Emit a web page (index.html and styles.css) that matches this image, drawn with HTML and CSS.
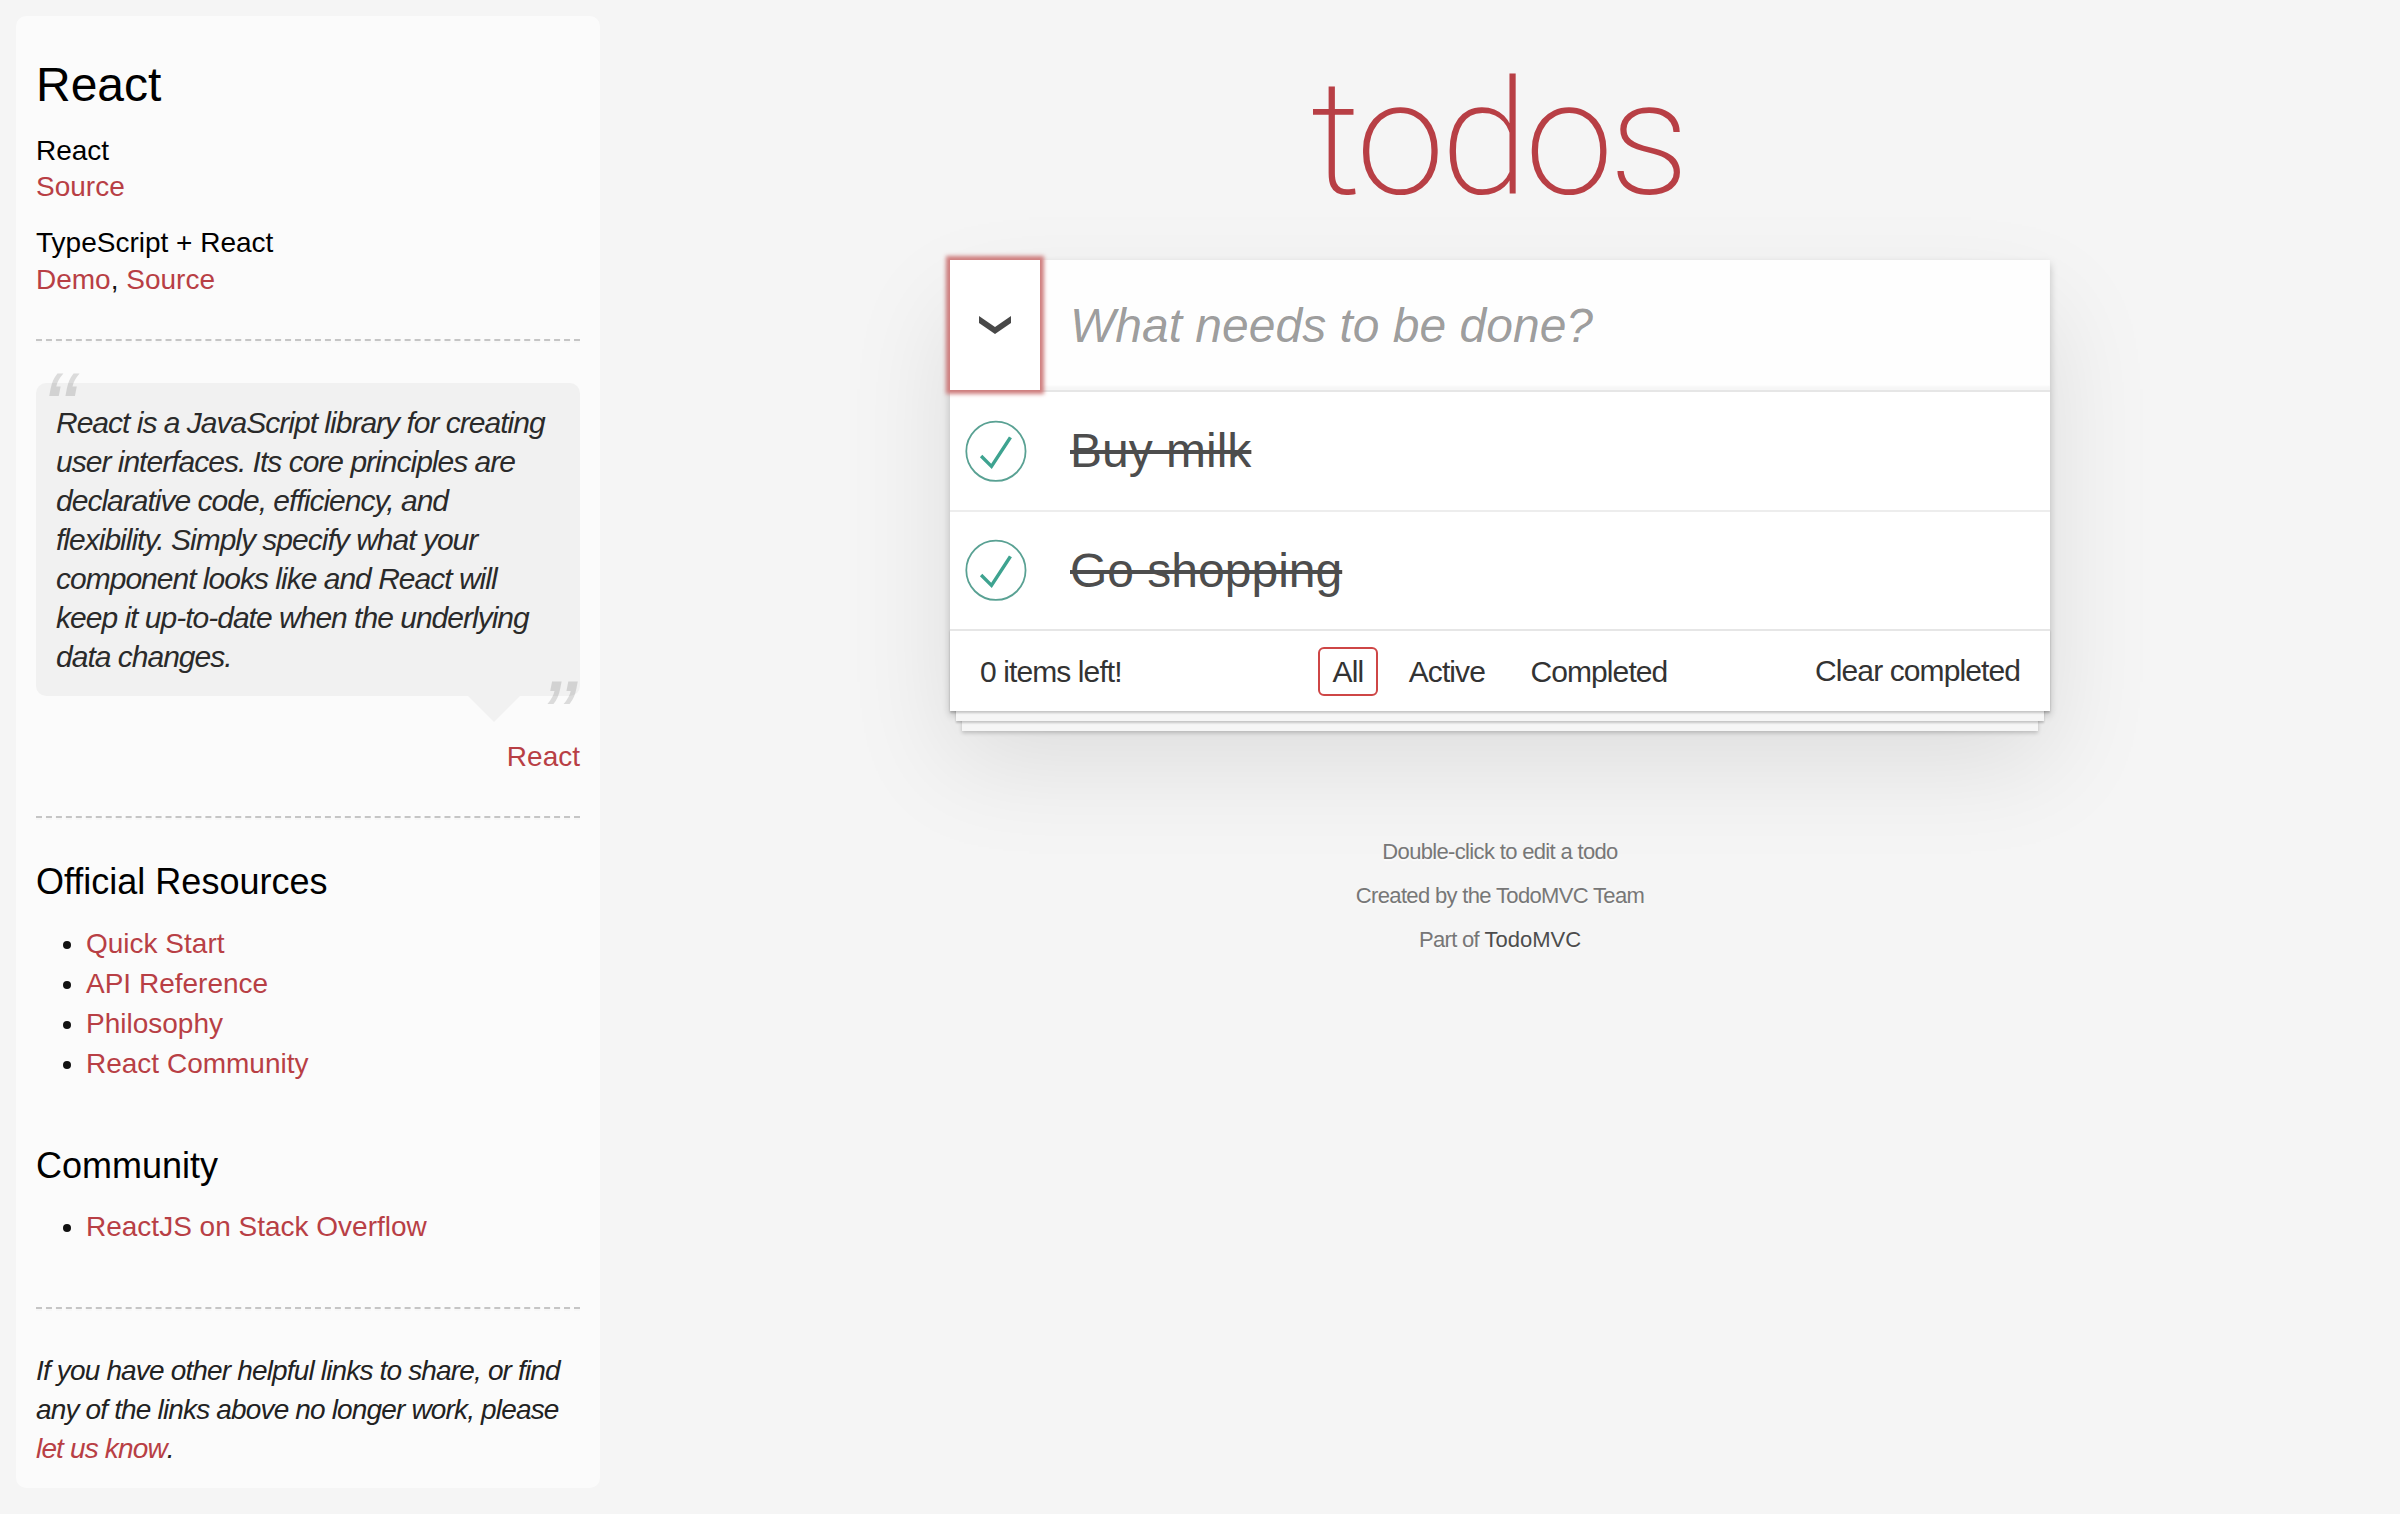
FILE: index.html
```html
<!DOCTYPE html>
<html lang="en">
<head>
<meta charset="utf-8">
<title>React • TodoMVC</title>
<link rel="stylesheet" href="styles.css">
</head>
<body>
<div class="page">
  <aside class="learn">
    <header>
      <h3>React</h3>
      <h5>React</h5>
      <div class="source-links"><a href="#">Source</a></div>
      <h5>TypeScript + React</h5>
      <div class="source-links"><a href="#">Demo</a>, <a href="#">Source</a></div>
    </header>
    <hr>
    <blockquote class="quote">
      <div class="speech-bubble">
        <p>React is a JavaScript library for creating<br> user interfaces. Its core principles are<br> declarative code, efficiency, and<br> flexibility. Simply specify what your<br> component looks like and React will<br> keep it up-to-date when the underlying<br> data changes.</p>
      </div>
      <footer class="quote-footer"><a href="#">React</a></footer>
    </blockquote>
    <hr>
    <h4>Official Resources</h4>
    <ul>
      <li><a href="#">Quick Start</a></li>
      <li><a href="#">API Reference</a></li>
      <li><a href="#">Philosophy</a></li>
      <li><a href="#">React Community</a></li>
    </ul>
    <h4>Community</h4>
    <ul>
      <li><a href="#">ReactJS on Stack Overflow</a></li>
    </ul>
    <footer class="learn-footer">
      <hr>
      <em>If you have other helpful links to share, or find<br> any of the links above no longer work, please<br> <a href="#">let us know</a>.</em>
    </footer>
  </aside>

  <main class="app-col">
    <div class="container">
      <h1 class="title">todos</h1>
      <section class="todoapp">
        <header class="header">
          <label class="toggle-all" aria-label="Mark all as complete">
            <svg class="chevron" viewBox="0 0 32 20" width="32" height="20" aria-hidden="true"><polygon points="0,1 16,12 32,1 32,8 16,19 0,8" fill="#484848"/></svg>
          </label>
          <input class="new-todo" type="text" placeholder="What needs to be done?">
        </header>
        <ul class="todo-list">
          <li class="completed">
            <svg class="check" viewBox="-10 -18 100 135" width="80" height="80" aria-hidden="true"><circle cx="50" cy="50" r="50" fill="none" stroke="#59A193" stroke-width="3"/><path fill="#3EA390" d="M72 25L42 71 27 56l-4 4 20 20 34-52z"/></svg>
            <label>Buy milk</label>
          </li>
          <li class="completed">
            <svg class="check" viewBox="-10 -18 100 135" width="80" height="80" aria-hidden="true"><circle cx="50" cy="50" r="50" fill="none" stroke="#59A193" stroke-width="3"/><path fill="#3EA390" d="M72 25L42 71 27 56l-4 4 20 20 34-52z"/></svg>
            <label>Go shopping</label>
          </li>
        </ul>
        <footer class="footer">
          <span class="todo-count"><strong>0</strong> items left!</span>
          <ul class="filters">
            <li><a href="#" class="selected">All</a></li>
            <li><a href="#">Active</a></li>
            <li><a href="#">Completed</a></li>
          </ul>
          <button class="clear-completed" type="button">Clear completed</button>
        </footer>
      </section>
      <footer class="info">
        <p>Double-click to edit a todo</p>
        <p>Created by the TodoMVC Team</p>
        <p>Part of <a href="#">TodoMVC</a></p>
      </footer>
    </div>
  </main>
</div>
</body>
</html>
```

FILE: styles.css
```css
html {
  background: #f5f5f5;
}

body {
  margin: 0;
  font-family: "Liberation Sans", Arial, Helvetica, sans-serif;
  font-size: 28px;
  line-height: 39.2px;
  font-weight: 300;
  color: #111111;
  background: #f5f5f5;
}

.page {
  display: flex;
  align-items: flex-start;
}

/* ---------- Learn sidebar ---------- */

.learn {
  flex: none;
  width: 544px;
  margin: 16px 0 16px 16px;
  padding: 20px;
  border-radius: 10px;
  background: rgba(255, 255, 255, 0.6);
}

.learn a {
  color: #b83f45;
  text-decoration: none;
  font-weight: 400;
}

.learn h3,
.learn h4,
.learn h5 {
  margin: 20px 0;
  font-weight: 500;
  line-height: 1.2;
  color: #000;
}

.learn h3 {
  font-size: 48px;
}

.learn h4 {
  font-size: 36px;
}

.learn h5 {
  font-size: 28px;
  margin-bottom: 0;
}

.learn hr {
  height: 0;
  margin: 40px 0;
  border: 0;
  border-top: 2px dashed #c5c5c5;
  border-bottom: 2px dashed #f7f7f7;
}

.learn ul {
  padding: 0;
  margin: 0 0 60px 50px;
}

.learn li {
  line-height: 40px;
}

.quote {
  margin: 40px 0;
}

.speech-bubble {
  position: relative;
  padding: 20px;
  background: rgba(0, 0, 0, 0.04);
  border-radius: 10px;
}

.speech-bubble::after {
  content: "";
  position: absolute;
  top: 100%;
  right: 60px;
  border: 26px solid transparent;
  border-top-color: rgba(0, 0, 0, 0.04);
}

.quote p {
  margin: 0;
  font-size: 30px;
  line-height: 1.3;
  font-style: italic;
  font-weight: 300;
  letter-spacing: -0.033em;
  color: #2a2a2a;
}

.quote p::before,
.quote p::after {
  position: absolute;
  font-size: 100px;
  opacity: 0.15;
  letter-spacing: 0;
}

.quote p::before {
  content: "\201C";
  top: -40px;
  left: 6px;
}

.quote p::after {
  content: "\201D";
  bottom: -84px;
  right: 6px;
}

.quote-footer {
  margin-top: 41px;
  text-align: right;
}

.learn-footer em {
  font-style: italic;
  letter-spacing: -0.03em;
  color: #222;
}

/* ---------- App column ---------- */

.app-col {
  flex: 1;
  min-width: 0;
  padding-top: 59px;
}

.container {
  width: 1100px;
  margin: 0 auto;
}

.title {
  margin: 0 0 41px;
  height: 160px;
  font-family: Roboto, "Liberation Sans", sans-serif;
  font-size: 160px;
  line-height: 160px;
  font-weight: 200;
  letter-spacing: -4px;
  text-indent: -4px;
  text-align: center;
  color: #b83f45;
}

.todoapp {
  background: #fff;
  margin: 0 0 80px;
  box-shadow: 0 4px 8px 0 rgba(0, 0, 0, 0.2),
              0 50px 100px 0 rgba(0, 0, 0, 0.1);
}

.header {
  display: flex;
}

.toggle-all {
  position: relative;
  z-index: 1;
  flex: none;
  width: 90px;
  height: 130px;
  display: flex;
  align-items: center;
  justify-content: center;
  box-shadow: 0 0 4px 4px #cf7d7d;
}

.chevron {
  display: block;
}

.new-todo {
  flex: 1;
  min-width: 0;
  height: 130px;
  box-sizing: border-box;
  margin: 0;
  padding: 32px 32px 32px 30px;
  border: none;
  font-family: inherit;
  font-size: 48px;
  font-weight: 300;
  line-height: 1.4em;
  color: inherit;
  background: rgba(0, 0, 0, 0.003);
  box-shadow: inset 0 -4px 2px rgba(0, 0, 0, 0.03);
  outline: none;
}

.new-todo::placeholder {
  font-style: italic;
  font-weight: 400;
  color: rgba(0, 0, 0, 0.4);
}

.todo-list {
  margin: 0;
  padding: 0;
  list-style: none;
  border-top: 2px solid #e6e6e6;
}

.todo-list li {
  display: flex;
  align-items: center;
  font-size: 48px;
  border-bottom: 2px solid #ededed;
}

.todo-list li:last-child {
  border-bottom: none;
}

.check {
  flex: none;
  display: block;
  width: 80px;
  height: 80px;
}

.todo-list label {
  flex: 1;
  padding: 30px 30px 30px 40px;
  line-height: 1.2;
  font-weight: 400;
  color: #4d4d4d;
  word-break: break-all;
}

.todo-list li.completed label {
  text-decoration: line-through;
}

.footer {
  display: grid;
  grid-template-columns: 1fr auto 1fr;
  align-items: center;
  height: 40px;
  padding: 20px 30px;
  border-top: 2px solid #e6e6e6;
  font-size: 30px;
  color: #333;
  letter-spacing: -0.03em;
  box-shadow: 0 2px 2px rgba(0, 0, 0, 0.2),
              0 16px 0 -6px #f6f6f6,
              0 18px 2px -6px rgba(0, 0, 0, 0.2),
              0 32px 0 -12px #f6f6f6,
              0 34px 4px -12px rgba(0, 0, 0, 0.2);
}

.todo-count {
  justify-self: start;
  white-space: nowrap;
}

.todo-count strong {
  font-weight: 300;
}

.filters {
  margin: 0;
  padding: 0;
  list-style: none;
  white-space: nowrap;
}

.filters li {
  display: inline;
}

.filters a {
  color: inherit;
  margin: 4px;
  padding: 6px 13px;
  text-decoration: none;
  border: 2px solid transparent;
  border-radius: 6px;
}

.filters a.selected {
  border-color: #ce4646;
}

.clear-completed {
  justify-self: end;
  margin: 0;
  padding: 0;
  border: 0;
  background: none;
  font: inherit;
  line-height: 38px;
  color: inherit;
  letter-spacing: inherit;
  white-space: nowrap;
}

.info {
  margin: 130px 0 0;
  color: #777;
  font-size: 22px;
  text-align: center;
  letter-spacing: -0.03em;
  text-shadow: 0 2px 0 rgba(255, 255, 255, 0.5);
}

.info p {
  margin: 22px 0;
  line-height: 1;
}

.info a {
  color: #4d4d4d;
  font-weight: 400;
  text-decoration: none;
  letter-spacing: 0;
}
```
